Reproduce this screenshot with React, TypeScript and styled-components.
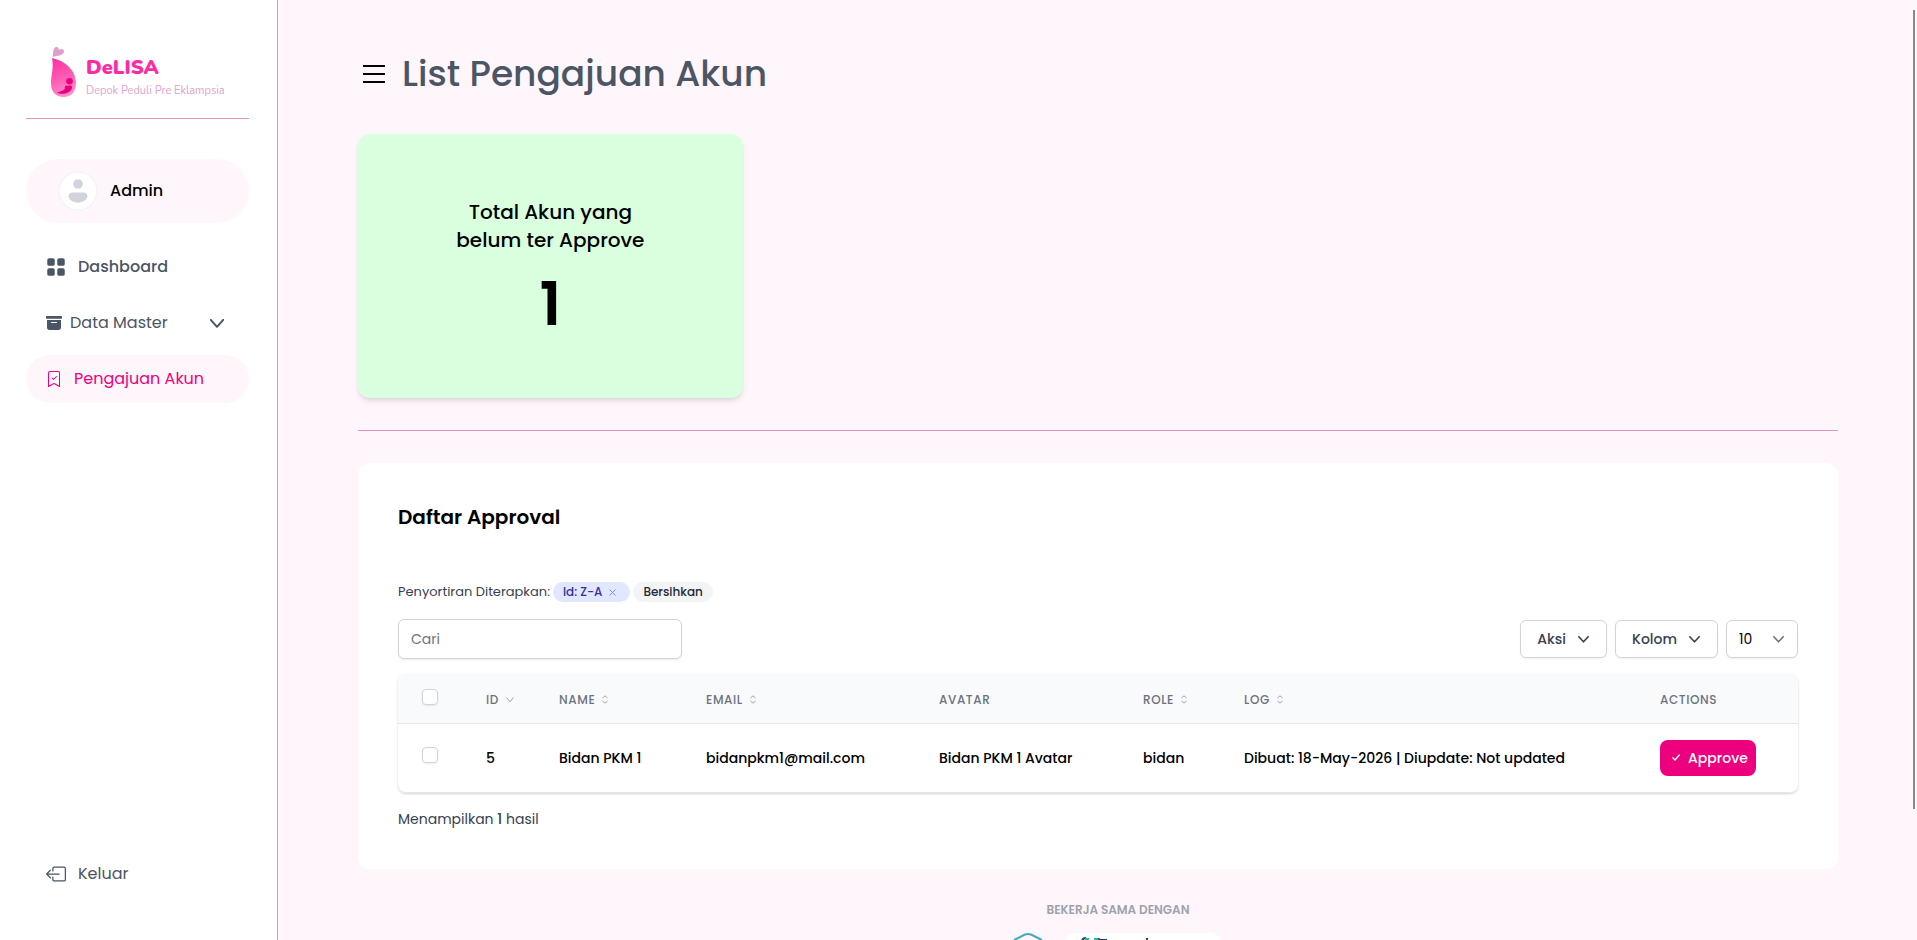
import React from "react";
import styled, { createGlobalStyle, css } from "styled-components";
import { BsArchiveFill, BsBookmarkCheck, BsBoxArrowLeft, BsGridFill } from "react-icons/bs";

const GlobalStyle = createGlobalStyle`
  *, *::before, *::after { box-sizing: border-box; }
  body {
    margin: 0;
    background: #fff6fc;
    color: #000;
    font-family: Poppins, Inter, "Liberation Sans", sans-serif;
    font-size: 14px;
    line-height: 24px;
  }
  button, input, select { font: inherit; color: inherit; }
  h1, h2, p { margin: 0; }
`;

const Shell = styled.div`
  display: flex;
  height: 100vh;
  overflow: hidden;
`;

/* Sidebar */

const Sidebar = styled.aside`
  flex: 0 0 278px;
  display: flex;
  flex-direction: column;
  padding: 44px 28px 42px 26px;
  background: #fff;
  border-right: 1px solid #df93c4;
`;

const Brand = styled.a`
  display: flex;
  align-items: flex-start;
  gap: 10px;
  padding-left: 24px;
  height: 74px;
  text-decoration: none;
`;

const BrandText = styled.div`
  display: flex;
  flex-direction: column;
  padding-top: 12px;
  font-family: Nunito, Lato, sans-serif;
  white-space: nowrap;
`;

const BrandName = styled.span`
  font-size: 20px;
  line-height: 24px;
  font-weight: 900;
  color: #ff2ba6;
`;

const BrandTagline = styled.span`
  font-size: 11px;
  line-height: 22px;
  color: #e0a3cd;
`;

const SidebarRule = styled.hr`
  width: 100%;
  margin: 0 0 40px;
  border: 0;
  border-top: 1px solid #df93c4;
`;

const Profile = styled.div`
  display: flex;
  align-items: center;
  gap: 12px;
  height: 64px;
  margin-bottom: 20px;
  padding-left: 32px;
  border-radius: 32px;
  background: #fff6fc;
  font-size: 16px;
  font-weight: 500;
`;

const Nav = styled.nav`
  flex: 1;
  display: flex;
  flex-direction: column;
  gap: 8px;
`;

const navItem = css<{ $gap: number; $active?: boolean; $strong?: boolean }>`
  display: flex;
  align-items: center;
  gap: ${(p) => p.$gap}px;
  width: 100%;
  height: 48px;
  flex: none;
  padding: 0 25px 0 20px;
  border: 0;
  border-radius: 24px;
  background: ${(p) => (p.$active ? "#fff6fc" : "transparent")};
  color: ${(p) => (p.$active ? "#ed007d" : "#4b5563")};
  font-size: 16px;
  font-weight: ${(p) => (p.$strong ? 500 : 400)};
  text-decoration: none;
  cursor: pointer;
`;

const NavLink = styled.a`${navItem}`;
const NavButton = styled.button`${navItem}`;

const NavLabel = styled.span`
  flex: 1;
  text-align: left;
  white-space: nowrap;
`;

/* Main column */

const Main = styled.main`
  flex: 1;
  min-width: 0;
  overflow-y: auto;
  scrollbar-width: none;
  padding: 44px 79px 40px 80px;
`;

const ScrollThumb = styled.div`
  position: fixed;
  top: 10px;
  right: 2px;
  width: 2px;
  height: 85vh;
  background: #888;
`;

const PageHeader = styled.header`
  display: flex;
  align-items: center;
  gap: 16px;
  height: 60px;
  margin-bottom: 30px;
  padding-left: 5px;
`;

const MenuButton = styled.button`
  display: flex;
  padding: 0;
  border: 0;
  background: none;
  cursor: pointer;
`;

const PageTitle = styled.h1`
  font-size: 36px;
  line-height: 40px;
  font-weight: 500;
  color: #4b5563;
`;

const StatCard = styled.section`
  display: flex;
  flex-direction: column;
  align-items: center;
  justify-content: center;
  gap: 20px;
  width: 26%;
  min-width: 280px;
  height: 264px;
  border-radius: 12px;
  background: #d9ffde;
  box-shadow: 0 4px 6px -1px rgba(0, 0, 0, 0.1), 0 2px 4px -2px rgba(0, 0, 0, 0.1);
  text-align: center;
`;

const StatLabel = styled.h2`
  max-width: 200px;
  font-size: 20px;
  line-height: 28px;
  font-weight: 500;
`;

const StatValue = styled.p`
  font-size: 60px;
  line-height: 60px;
  font-weight: 600;
`;

const Divider = styled.hr`
  margin: 32px 0;
  border: 0;
  border-top: 1px solid #df93c4;
`;

const Panel = styled.section`
  padding: 40px 40px 38px;
  border-radius: 12px;
  background: #fff;
`;

const PanelTitle = styled.h2`
  margin-bottom: 51px;
  font-size: 20px;
  line-height: 28px;
  font-weight: 600;
`;

const SortRow = styled.div`
  display: flex;
  align-items: center;
  gap: 3px;
  height: 20px;
  margin-bottom: 17px;
  font-size: 13px;
  color: #374151;
  white-space: nowrap;
`;

const Pill = styled.span`
  display: flex;
  align-items: center;
  gap: 7px;
  height: 20px;
  padding: 0 14px 0 10px;
  border-radius: 10px;
  background: #e0e7ff;
  color: #3730a3;
  font-size: 12px;
  font-weight: 500;
`;

const PillClose = styled.button`
  display: flex;
  padding: 0;
  border: 0;
  background: none;
  color: #818cf8;
  cursor: pointer;
`;

const ClearButton = styled.button`
  height: 20px;
  padding: 0 10px;
  border: 0;
  border-radius: 10px;
  background: #f3f4f6;
  color: #1f2937;
  font-size: 12px;
  line-height: 20px;
  font-weight: 500;
  cursor: pointer;
`;

const Toolbar = styled.div`
  display: flex;
  align-items: center;
  gap: 8px;
  margin-bottom: 15px;
`;

const SearchInput = styled.input`
  width: 284px;
  height: 40px;
  margin-right: auto;
  padding: 0 12px;
  border: 1px solid #d1d5db;
  border-radius: 6px;
  background: #fff;
  box-shadow: 0 1px 2px rgba(0, 0, 0, 0.08);
  &::placeholder { color: #6b7280; opacity: 1; }
`;

const controlBox = css`
  height: 38px;
  border: 1px solid #d1d5db;
  border-radius: 6px;
  background: #fff;
  box-shadow: 0 1px 2px rgba(0, 0, 0, 0.06);
  font-size: 14px;
  cursor: pointer;
`;

const DropButton = styled.button`
  ${controlBox}
  display: flex;
  align-items: center;
  gap: 12px;
  padding: 0 17px 0 16px;
  color: #374151;
  font-weight: 500;
`;

const SelectWrap = styled.label`
  position: relative;
  color: #6b7280;
  svg {
    position: absolute;
    top: 16px;
    right: 14px;
    pointer-events: none;
  }
`;

const PageSize = styled.select`
  ${controlBox}
  display: block;
  appearance: none;
  width: 72px;
  padding: 0 12px;
  color: #000;
`;

const TableFrame = styled.div`
  overflow: hidden;
  margin-bottom: 14px;
  border-bottom: 1px solid #e5e7eb;
  border-radius: 8px;
  box-shadow: 0 1px 3px rgba(0, 0, 0, 0.12), 0 1px 2px rgba(0, 0, 0, 0.06);
`;

const Table = styled.table`
  width: 100%;
  table-layout: fixed;
  border-collapse: collapse;
`;

const Col = styled.col<{ $width: number }>`
  width: ${(p) => p.$width}px;
`;

const HeadCell = styled.th`
  height: 49px;
  padding: 3px 0 0 24px;
  border-bottom: 1px solid #e5e7eb;
  background: #f9fafb;
  color: #6b7280;
  font-size: 12px;
  line-height: 16px;
  font-weight: 500;
  letter-spacing: 0.05em;
  text-transform: uppercase;
  text-align: left;
  white-space: nowrap;
`;

const SortButton = styled.button`
  display: flex;
  align-items: center;
  gap: 7px;
  padding: 0;
  border: 0;
  background: none;
  color: inherit;
  letter-spacing: inherit;
  text-transform: inherit;
  cursor: pointer;
  svg { color: #9ca3af; }
`;

const Cell = styled.td`
  height: 69px;
  padding: 0 0 0 24px;
  font-size: 14px;
  font-weight: 500;
  white-space: nowrap;
`;

const CheckBox = styled.input`
  appearance: none;
  display: block;
  width: 16px;
  height: 16px;
  margin: 0 0 5px;
  border: 1px solid #d1d5db;
  border-radius: 4px;
  background: #fff;
  box-shadow: 0 1px 2px rgba(0, 0, 0, 0.08);
`;

const ApproveButton = styled.button`
  display: flex;
  align-items: center;
  justify-content: center;
  gap: 8px;
  width: 96px;
  height: 36px;
  padding: 0 0 0 4px;
  border: 0;
  border-radius: 8px;
  background: #ed007d;
  color: #fff;
  cursor: pointer;
`;

const ResultCount = styled.p`
  color: #374151;
  strong { font-weight: 500; }
`;

const Partners = styled.footer`
  display: flex;
  flex-direction: column;
  align-items: center;
  gap: 15px;
  padding: 33px 0 0 40px;
`;

const PartnersTitle = styled.p`
  font-size: 12px;
  line-height: 16px;
  font-weight: 600;
  color: #9ca3af;
  text-transform: uppercase;
`;

const PartnerLogos = styled.div`
  display: flex;
  gap: 16px;
`;

const PartnerBadge = styled.div`
  display: flex;
  width: 164px;
  height: 32px;
  padding-left: 20px;
  border-radius: 16px;
  background: #fff;
`;

/* Drawings */

const BrandMark = () => (
  <svg width="26" height="54" viewBox="0 0 26 54" aria-hidden="true">
    <defs>
      <linearGradient id="drop" x1="0" y1="0" x2="0.3" y2="1">
        <stop offset="0" stopColor="#ff2ba0" />
        <stop offset="0.6" stopColor="#ff5cb4" />
        <stop offset="1" stopColor="#ff8ccb" />
      </linearGradient>
    </defs>
    <path d="M2.500 13C3.500 10 2.500 8 4 5c1-3 5-2.500 5 1 2-2 5-1 5 1.500C14 11.500 8 11.500 2.500 13z" fill="#dda0cc" />
    <path d="M2 14c13 3 24 12 24 25 0 9-5 14-12.500 14S1 48 1 39C1 30 4 24 2 14z" fill="url(#drop)" />
    <circle cx="19.500" cy="37.300" r="3.300" fill="#ed007d" />
    <path d="M6.500 48.500c4-.5 7-2 8.500-4-1-2 1-4 3-2.500 2-1.500 4.500-.5 4 2-1 5-10 7.500-15.500 4.500z" fill="#ed007d" />
  </svg>
);

const Avatar = () => (
  <svg width="40" height="40" viewBox="0 0 40 40" aria-hidden="true">
    <circle cx="20" cy="20" r="19" fill="#fff" stroke="#f3f4f6" strokeWidth="1.500" />
    <circle cx="20" cy="13" r="4.800" fill="#d1d5db" />
    <path d="M15 21.500h10c3 0 4.500 1.500 4.500 3.700C29 29 25 31.500 20 31.500s-9-2.500-9.500-6.300c0-2.200 1.500-3.700 4.500-3.700z" fill="#d1d5db" />
  </svg>
);

const Chevron = ({ w = 10, h = 6, stroke = 2 }) => (
  <svg width={w} height={h} viewBox={`0 0 ${w} ${h}`} fill="none" stroke="currentColor" strokeWidth={stroke} aria-hidden="true">
    <path d={`M0.800 0.800L${w / 2} ${h - 1.2}L${w - 0.8} 0.800`} strokeLinecap="round" strokeLinejoin="round" />
  </svg>
);

const SortBoth = () => (
  <svg width="6" height="9" viewBox="0 0 6 9" fill="none" stroke="currentColor" aria-hidden="true">
    <path d="M0.500 3L3 0.800L5.500 3M0.500 6L3 8.200L5.500 6" />
  </svg>
);

const MenuIcon = () => (
  <svg width="23" height="18" viewBox="0 0 23 18" aria-hidden="true">
    <path d="M0 0h22v2H0zM0 8h22v2H0zM0 16h22v2H0z" />
  </svg>
);

const CloseIcon = () => (
  <svg width="7" height="7" viewBox="0 0 7 7" stroke="currentColor" aria-hidden="true">
    <path d="M0.500 0.500l6 6M6.500 0.500l-6 6" />
  </svg>
);

const CheckIcon = () => (
  <svg width="8" height="7" viewBox="0 0 8 7" fill="none" stroke="currentColor" strokeWidth="1.400" aria-hidden="true">
    <path d="M0.500 3.500L3 6L7.500 0.700" />
  </svg>
);

const HexLogo = () => (
  <svg width="33" height="36" viewBox="0 0 33 36" fill="none" stroke="#45a9bd" aria-hidden="true">
    <path d="M4 6L13 1.500q3-1 6 0L28 6q2 1 2 3v15q0 2-2 3l-9 5q-3 1-6 0l-9-5q-2-1-2-3V9q0-2 2-3z" strokeWidth="2" />
    <path d="M15 7v6M12 10h6" />
  </svg>
);

const PartnerMark = () => (
  <svg width="74" height="14" viewBox="0 0 74 14" fill="none" aria-hidden="true">
    <path d="M1 9q0-4 4-4" stroke="#283b5b" strokeWidth="2" />
    <path d="M4 6h4M13 6h4" stroke="#15c39a" strokeWidth="2" />
    <path d="M17 6q3 0 3 4M20 7h6M66 5v7" stroke="#283b5b" strokeWidth="2" />
  </svg>
);

/* Data */

type Column = { label: string; width: number; sort?: "desc" | "both" };

const columns: Column[] = [
  { label: "ID", width: 73, sort: "desc" },
  { label: "Name", width: 147, sort: "both" },
  { label: "Email", width: 233, sort: "both" },
  { label: "Avatar", width: 204 },
  { label: "Role", width: 101, sort: "both" },
  { label: "Log", width: 416, sort: "both" },
  { label: "Actions", width: 162 },
];

const rows = [
  ["5", "Bidan PKM 1", "bidanpkm1@mail.com", "Bidan PKM 1 Avatar", "bidan", "Dibuat: 18-May-2026 | Diupdate: Not updated"],
];

export default function App() {
  return (
    <Shell>
      <GlobalStyle />
      <Sidebar>
        <Brand href="#">
          <BrandMark />
          <BrandText>
            <BrandName>DeLISA</BrandName>
            <BrandTagline>Depok Peduli Pre Eklampsia</BrandTagline>
          </BrandText>
        </Brand>
        <SidebarRule />
        <Profile>
          <Avatar />
          Admin
        </Profile>
        <Nav>
          <NavLink href="#" $gap={12} $strong>
            <BsGridFill size={20} />
            <NavLabel>Dashboard</NavLabel>
          </NavLink>
          <NavButton type="button" $gap={8}>
            <BsArchiveFill size={16} />
            <NavLabel>Data Master</NavLabel>
            <Chevron w={14} h={9} />
          </NavButton>
          <NavLink href="#" $gap={12} $active>
            <BsBookmarkCheck size={16} />
            <NavLabel>Pengajuan Akun</NavLabel>
          </NavLink>
        </Nav>
        <NavButton type="button" $gap={12}>
          <BsBoxArrowLeft size={20} />
          <NavLabel>Keluar</NavLabel>
        </NavButton>
      </Sidebar>

      <Main>
        <PageHeader>
          <MenuButton type="button" aria-label="Menu">
            <MenuIcon />
          </MenuButton>
          <PageTitle>List Pengajuan Akun</PageTitle>
        </PageHeader>

        <StatCard>
          <StatLabel>Total Akun yang belum ter Approve</StatLabel>
          <StatValue>1</StatValue>
        </StatCard>

        <Divider />

        <Panel>
          <PanelTitle>Daftar Approval</PanelTitle>
          <SortRow>
            <span>Penyortiran Diterapkan:</span>
            <Pill>
              Id: Z-A
              <PillClose type="button" aria-label="Hapus">
                <CloseIcon />
              </PillClose>
            </Pill>
            <ClearButton type="button">Bersihkan</ClearButton>
          </SortRow>
          <Toolbar>
            <SearchInput type="text" placeholder="Cari" aria-label="Cari" />
            <DropButton type="button">
              Aksi <Chevron w={11} h={7} stroke={1.6} />
            </DropButton>
            <DropButton type="button">
              Kolom <Chevron w={11} h={7} stroke={1.6} />
            </DropButton>
            <SelectWrap>
              <PageSize defaultValue="10" aria-label="Per halaman">
                <option>10</option>
                <option>25</option>
                <option>50</option>
              </PageSize>
              <Chevron w={11} h={7} stroke={1.6} />
            </SelectWrap>
          </Toolbar>
          <TableFrame>
            <Table>
              <colgroup>
                <Col $width={64} />
                {columns.map((c) => (
                  <Col key={c.label} $width={c.width} />
                ))}
              </colgroup>
              <thead>
                <tr>
                  <HeadCell>
                    <CheckBox type="checkbox" aria-label="Pilih semua" />
                  </HeadCell>
                  {columns.map((c) => (
                    <HeadCell key={c.label}>
                      {c.sort ? (
                        <SortButton type="button">
                          {c.label}
                          {c.sort === "desc" ? <Chevron w={8} h={6} stroke={1} /> : <SortBoth />}
                        </SortButton>
                      ) : (
                        c.label
                      )}
                    </HeadCell>
                  ))}
                </tr>
              </thead>
              <tbody>
                {rows.map((row) => (
                  <tr key={row[0]}>
                    <Cell>
                      <CheckBox type="checkbox" aria-label={`Pilih ${row[1]}`} />
                    </Cell>
                    {row.map((value, i) => (
                      <Cell key={i}>{value}</Cell>
                    ))}
                    <Cell>
                      <ApproveButton type="button">
                        <CheckIcon />
                        Approve
                      </ApproveButton>
                    </Cell>
                  </tr>
                ))}
              </tbody>
            </Table>
          </TableFrame>
          <ResultCount>
            Menampilkan <strong>1</strong> hasil
          </ResultCount>
        </Panel>

        <Partners>
          <PartnersTitle>Bekerja sama dengan</PartnersTitle>
          <PartnerLogos>
            <HexLogo />
            <PartnerBadge>
              <PartnerMark />
            </PartnerBadge>
          </PartnerLogos>
        </Partners>
      </Main>
      <ScrollThumb aria-hidden="true" />
    </Shell>
  );
}
